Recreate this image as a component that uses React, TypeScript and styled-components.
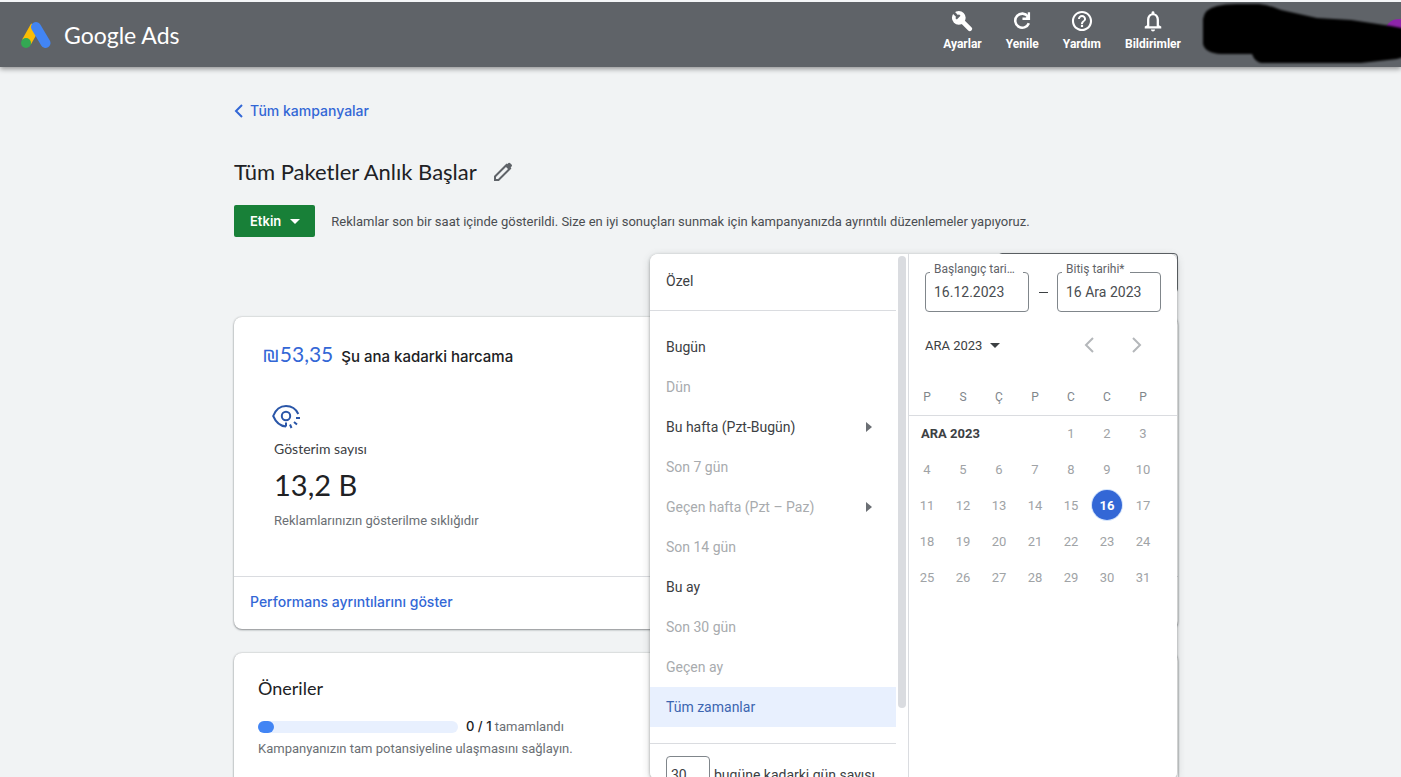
import React from "react";
import styled, { createGlobalStyle } from "styled-components";

const display = `Lato, "Open Sans", sans-serif`;
const medium = `Inter, "Open Sans", sans-serif`;
const body = `Roboto, "Liberation Sans", sans-serif`;

const GlobalStyle = createGlobalStyle`
  *, *::before, *::after { box-sizing: border-box; }
  body { margin: 0; background: #f1f3f4; color: #202124; font-family: ${body}; font-size: 13px; }
  button, input { font: inherit; color: inherit; }
  a { text-decoration: none; }
`;

const Page = styled.div`
  height: 100vh;
  overflow: hidden;
  display: flex;
  flex-direction: column;
  background: #f1f3f4;
`;

const Header = styled.header`
  flex: none;
  position: relative;
  display: flex;
  align-items: center;
  justify-content: space-between;
  height: 67px;
  padding: 0 220px 0 20px;
  border-top: 2px solid #f4f6f8;
  background: #5f6368;
  box-shadow: 0 2px 5px rgba(0, 0, 0, 0.4);
`;

const Brand = styled.a`
  display: flex;
  align-items: center;
  gap: 12px;
  color: #fff;
  font-family: ${display};
  font-size: 23px;
  line-height: 32px;
`;

const Tools = styled.nav`
  display: flex;
  gap: 24px;
  padding-bottom: 7px;
`;

const Tool = styled.button`
  display: flex;
  flex-direction: column;
  align-items: center;
  gap: 4px;
  padding: 0;
  border: 0;
  background: none;
  color: #fff;
  font-size: 12px;
  font-weight: 700;
  line-height: 16px;
`;

const Scribble = styled.svg`
  position: absolute;
  top: 0;
  right: 0;
`;

const Main = styled.main`
  padding-left: 11px;
`;

const Content = styled.div`
  max-width: 944px;
  margin: 0 auto;
`;

const BackLink = styled.a`
  display: flex;
  align-items: center;
  gap: 7px;
  padding-top: 34px;
  color: #3367d6;
  font-family: ${medium};
  font-size: 14px;
  font-weight: 500;
  line-height: 20px;
`;

const TitleRow = styled.div`
  display: flex;
  align-items: center;
  gap: 16px;
  margin-top: 37px;
`;

const Title = styled.h1`
  margin: 0;
  font-family: ${display};
  font-size: 22px;
  font-weight: 400;
  line-height: 28px;
`;

const IconButton = styled.button`
  display: flex;
  padding: 0;
  border: 0;
  background: none;
`;

const StatusRow = styled.div`
  display: flex;
  align-items: center;
  gap: 16px;
  margin-top: 19px;
  color: #4a4d51;
`;

const StatusButton = styled.button`
  display: flex;
  align-items: center;
  gap: 9px;
  height: 32px;
  padding: 0 15px 0 16px;
  border: 0;
  border-radius: 2px;
  background: #188038;
  color: #fff;
  font-family: ${medium};
  font-size: 13px;
  font-weight: 600;
`;

const RangeBar = styled.div`
  position: relative;
  display: flex;
  justify-content: flex-end;
  margin-top: 16px;
`;

const RangeButton = styled.button`
  width: 180px;
  height: 40px;
  border: 1px solid #5f6368;
  border-radius: 4px;
  background: none;
`;

const Card = styled.section`
  margin-top: 24px;
  border-radius: 8px;
  background: #fff;
  box-shadow: 0 1px 2px rgba(60, 64, 67, 0.5), 0 0 2px rgba(60, 64, 67, 0.3);
`;

const SpendRow = styled.h2`
  display: flex;
  align-items: baseline;
  gap: 8px;
  margin: 0;
  padding: 23px 28px 0;
  font-family: ${medium};
  font-size: 15px;
  font-weight: 500;
  line-height: 28px;
`;

const Amount = styled.span`
  color: #3367d6;
  font-family: ${display};
  font-size: 21px;
  font-weight: 400;
`;

const Metric = styled.div`
  padding: 33px 40px 45px;
  line-height: 20px;
`;

const MetricIcon = styled.svg`
  display: block;
  margin-left: -2px;
`;

const MetricName = styled.div`
  margin-top: 10px;
  color: #3c4043;
  font-family: ${display};
  font-size: 14px;
`;

const MetricValue = styled.div`
  margin: 8px 0;
  font-family: ${display};
  font-size: 29px;
  line-height: 36px;
`;

const Muted = styled.span`
  color: #6b6f74;
`;

const CardFooter = styled.footer`
  padding: 15px 16px 16px;
  border-top: 1px solid #dadce0;
  line-height: 20px;
`;

const FooterLink = styled.a`
  color: #3367d6;
  font-family: ${medium};
  font-size: 14px;
  font-weight: 500;
`;

const Advice = styled.div`
  padding: 21px 24px 160px;
`;

const AdviceTitle = styled.h2`
  margin: 0;
  font-family: ${display};
  font-size: 18px;
  font-weight: 400;
  line-height: 28px;
`;

const ProgressRow = styled.div`
  display: flex;
  align-items: center;
  gap: 8px;
  margin-top: 14px;
  line-height: 20px;
`;

const Track = styled.div`
  width: 200px;
  height: 12px;
  border-radius: 6px;
  background: #e8f0fe;
`;

const Fill = styled.div`
  height: 12px;
  border-radius: 6px;
  background: #4285f4;
`;

const Count = styled.b`
  font-family: ${medium};
  font-size: 13px;
  font-weight: 500;
`;

const Hint = styled.p`
  margin: 2px 0 0;
  color: #6b6f74;
  line-height: 20px;
`;

const Popup = styled.div`
  position: absolute;
  top: 1px;
  right: 1px;
  z-index: 2;
  display: grid;
  grid-template-columns: 259px 268px;
  height: 526px;
  overflow: hidden;
  border-radius: 8px;
  background: #fff;
`;

const PopupShadow = styled(Popup)`
  z-index: -1;
  width: 527px;
  box-shadow: 0 1px 3px rgba(60, 64, 67, 0.45), 0 2px 8px rgba(60, 64, 67, 0.2);
`;

const PopupLayer = styled.div`
  position: absolute;
  inset: 0;
  z-index: 1;
`;

const ListPane = styled.div`
  display: flex;
  min-height: 0;
  border-right: 1px solid #dadce0;
`;

const List = styled.div`
  flex: 1;
  padding-top: 7px;
`;

const ScrollThumb = styled.div`
  width: 8px;
  height: 452px;
  margin: 2px 2px 0;
  border-radius: 4px;
  background: #dadce0;
`;

const Option = styled.button<{ $selected?: boolean }>`
  display: flex;
  align-items: center;
  justify-content: space-between;
  width: 100%;
  height: 40px;
  padding: 0 24px 0 16px;
  border: 0;
  background: ${(p) => (p.$selected ? "#e8f0fe" : "none")};
  color: ${(p) => (p.$selected ? "#3c65b0" : "#3c4043")};
  font-size: 14px;
  text-align: left;
  &:disabled { color: #a8abae; }
`;

const Divider = styled.hr<{ $top?: number }>`
  margin: ${(p) => p.$top ?? 9}px 0 16px;
  border: 0;
  border-top: 1px solid #dadce0;
`;

const DaysLabel = styled.label`
  display: flex;
  align-items: center;
  gap: 4px;
  margin-top: -4px;
  padding-left: 16px;
  color: #3c4043;
  font-size: 14px;
`;

const DaysInput = styled.input`
  width: 44px;
  height: 37px;
  padding: 0 4px;
  border: 1px solid #80868b;
  border-radius: 4px;
  outline: 0;
`;

const Fields = styled.div`
  display: flex;
  align-items: center;
  justify-content: space-between;
  padding: 18px 16px 0;
  font-size: 14px;
`;

const Dash = styled.span`
  width: 9px;
  border-top: 1px solid #3c4043;
`;

const Field = styled.div`
  position: relative;
  width: 104px;
`;

const FieldLabel = styled.label`
  position: absolute;
  top: -10px;
  left: 5px;
  max-width: 93px;
  padding: 0 5px 0 4px;
  overflow: hidden;
  background: #fff;
  color: #5f6368;
  font-size: 12px;
  line-height: 14px;
  text-overflow: ellipsis;
  white-space: nowrap;
`;

const FieldInput = styled.input`
  display: block;
  width: 100%;
  height: 40px;
  padding: 0 8px;
  border: 1px solid #80868b;
  border-radius: 4px;
  outline: 0;
  background: #fff;
  color: #4a4d51;
`;

const MonthNav = styled.div`
  display: flex;
  align-items: center;
  gap: 36px;
  height: 32px;
  margin: 17px 34px 18px 16px;
`;

const MonthButton = styled.button`
  display: flex;
  align-items: center;
  gap: 8px;
  margin-right: auto;
  padding: 0;
  border: 0;
  background: none;
  color: #3c4043;
`;

const Calendar = styled.table`
  width: 100%;
  table-layout: fixed;
  border-collapse: collapse;
  color: #a0a3a6;
  thead tr { border-bottom: 1px solid #dadce0; }
  th, td { height: 36px; padding: 0; text-align: center; font-weight: 400; }
  thead th { color: #80868b; font-size: 12px; }
`;

const DayCol = styled.col`
  width: 36px;
`;

const MonthCell = styled.th`
  && { padding-left: 12px; color: #3c4043; font-weight: 700; text-align: left; }
`;

const Day = styled.button<{ $selected?: boolean }>`
  width: 30px;
  height: 30px;
  padding: 0;
  border: 0;
  border-radius: 50%;
  background: ${(p) => (p.$selected ? "#3367d6" : "none")};
  color: ${(p) => (p.$selected ? "#fff" : "inherit")};
  font-weight: ${(p) => (p.$selected ? 700 : 400)};
  box-shadow: ${(p) => (p.$selected ? "0 0 0 1px #d2e3fc" : "none")};
`;

const CaretDown = () => (
  <svg width="10" height="5" viewBox="0 0 10 5" fill="currentColor" aria-hidden="true">
    <path d="M0 0h10L5 5z" />
  </svg>
);

const CaretRight = () => (
  <svg width="6" height="10" viewBox="0 0 6 10" fill="#6b6f74" aria-hidden="true">
    <path d="M0 0v10l6-5z" />
  </svg>
);

const Chevron = ({ d }: { d: string }) => (
  <svg width="12" height="18" viewBox="0 0 12 18" fill="none" stroke="#b4b7ba" strokeWidth="2" aria-hidden="true">
    <path d={d} />
  </svg>
);

const WrenchIcon = () => (
  <svg width="22" height="22" viewBox="0 0 24 24" aria-hidden="true">
    <path d="M11 11l9.500 9.500" stroke="#fff" strokeWidth="5" strokeLinecap="round" />
    <circle cx="8.500" cy="8.500" r="7.500" fill="#fff" />
    <path d="M2 2l5.500 5.500" stroke="#5f6368" strokeWidth="3" />
    <path d="M5.500 9.500l4-4" stroke="#5f6368" strokeWidth="2.500" />
  </svg>
);

const RefreshIcon = () => (
  <svg width="22" height="22" viewBox="0 0 24 24" aria-hidden="true">
    <path d="M19.500 14.500a7.700 7.700 0 1 1-1-7.500" fill="none" stroke="#fff" strokeWidth="2.800" />
    <path d="M20.800 2.500v8.300h-8.300v-2.500h3.700l2.100-2.100V2.500z" fill="#fff" />
  </svg>
);

const HelpIcon = () => (
  <svg width="22" height="22" viewBox="0 0 24 24" fill="#fff" aria-hidden="true">
    <path d="M10.800 18.600h2.400v-2.400h-2.400v2.400zM12 1C5.900 1 1 5.900 1 12s4.900 11 11 11 11-4.900 11-11S18.100 1 12 1zm0 19.700c-4.800 0-8.700-3.900-8.700-8.700S7.200 3.300 12 3.300s8.700 3.900 8.700 8.700-3.900 8.700-8.700 8.700zM12 5.400c-2.400 0-4.400 2-4.400 4.400h2.200c0-1.200 1-2.200 2.200-2.200s2.200 1 2.200 2.200c0 2.200-3.300 1.900-3.300 5.500h2.200c0-2.500 3.300-2.800 3.300-5.500 0-2.400-2-4.400-4.400-4.400z" />
  </svg>
);

const BellIcon = () => (
  <svg width="22" height="22" viewBox="0 0 24 24" fill="#fff" aria-hidden="true">
    <path d="M12 23.500c1.200 0 2.200-1 2.200-2.200H9.800c0 1.200 1 2.200 2.200 2.200zm6.500-7v-6c0-3.300-1.800-6-4.900-6.700V2.900a1.600 1.600 0 0 0-3.200 0v.9C7.300 4.500 5.500 7.200 5.500 10.500v6L3 18v2.200h18V18l-2.500-1.500zm-2.500 1.300H8v-7.300c0-2.600 1.500-4.700 4-4.700s4 2.100 4 4.700v7.300z" />
  </svg>
);

const toolItems = [
  { label: "Ayarlar", Icon: WrenchIcon },
  { label: "Yenile", Icon: RefreshIcon },
  { label: "Yardım", Icon: HelpIcon },
  { label: "Bildirimler", Icon: BellIcon },
];

const options: { label: string; off?: boolean; more?: boolean; selected?: boolean }[] = [
  { label: "Bugün" },
  { label: "Dün", off: true },
  { label: "Bu hafta (Pzt-Bugün)", more: true },
  { label: "Son 7 gün", off: true },
  { label: "Geçen hafta (Pzt – Paz)", off: true, more: true },
  { label: "Son 14 gün", off: true },
  { label: "Bu ay" },
  { label: "Son 30 gün", off: true },
  { label: "Geçen ay", off: true },
  { label: "Tüm zamanlar", selected: true },
];

const weekdays = ["P", "S", "Ç", "P", "C", "C", "P"];
const weeks = [4, 11, 18, 25].map((start) => Array.from({ length: 7 }, (_, i) => start + i));

const DayCell = ({ day }: { day: number }) => (
  <td>
    <Day $selected={day === 16}>{day}</Day>
  </td>
);

const DatePopup = () => (
  <Popup role="dialog" aria-label="Tarih aralığı">
    <ListPane>
      <List>
        <Option>Özel</Option>
        <Divider />
        {options.map((o) => (
          <Option key={o.label} disabled={o.off} $selected={o.selected}>
            {o.label}
            {o.more && <CaretRight />}
          </Option>
        ))}
        <Divider $top={16} />
        <DaysLabel>
          <DaysInput defaultValue="30" />
          bugüne kadarki gün sayısı
        </DaysLabel>
      </List>
      <ScrollThumb />
    </ListPane>
    <div>
      <Fields>
        <Field>
          <FieldInput id="start" defaultValue="16.12.2023" />
          <FieldLabel htmlFor="start">Başlangıç tarihi*</FieldLabel>
        </Field>
        <Dash />
        <Field>
          <FieldInput id="end" defaultValue="16 Ara 2023" />
          <FieldLabel htmlFor="end">Bitiş tarihi*</FieldLabel>
        </Field>
      </Fields>
      <MonthNav>
        <MonthButton>
          ARA 2023 <CaretDown />
        </MonthButton>
        <IconButton aria-label="Önceki ay">
          <Chevron d="M10 2L3 9l7 7" />
        </IconButton>
        <IconButton aria-label="Sonraki ay">
          <Chevron d="M2 2l7 7-7 7" />
        </IconButton>
      </MonthNav>
      <Calendar>
        <colgroup>
          {weekdays.map((_, i) => (
            <DayCol key={i} />
          ))}
          <col />
        </colgroup>
        <thead>
          <tr>
            {weekdays.map((w, i) => (
              <th key={i} scope="col">{w}</th>
            ))}
            <td />
          </tr>
        </thead>
        <tbody>
          <tr>
            <MonthCell colSpan={4}>ARA 2023</MonthCell>
            {[1, 2, 3].map((d) => (
              <DayCell key={d} day={d} />
            ))}
          </tr>
          {weeks.map((week) => (
            <tr key={week[0]}>
              {week.map((d) => (
                <DayCell key={d} day={d} />
              ))}
            </tr>
          ))}
        </tbody>
      </Calendar>
    </div>
  </Popup>
);

export default function App() {
  return (
    <Page>
      <GlobalStyle />
      <Header>
        <Brand href="#">
          <svg width="32" height="30" viewBox="0 0 32 30" aria-hidden="true">
            <path d="M15.500 6L6.500 22" stroke="#fbbc04" strokeWidth="10" />
            <path d="M16 7l9.500 16" stroke="#4285f4" strokeWidth="10" strokeLinecap="round" />
            <circle cx="6" cy="23" r="5" fill="#34a853" />
          </svg>
          Google Ads
        </Brand>
        <Tools>
          {toolItems.map(({ label, Icon }) => (
            <Tool key={label}>
              <Icon />
              {label}
            </Tool>
          ))}
        </Tools>
        <Scribble width="200" height="64" viewBox="0 0 200 64" aria-hidden="true">
          <defs>
            <filter id="soft" x="-5%" y="-10%" width="110%" height="120%">
              <feGaussianBlur stdDeviation="1" />
            </filter>
          </defs>
          <circle cx="198" cy="32" r="15" fill="#8e24aa" />
          <path
            filter="url(#soft)"
            d="M2 17Q3 7 16 4Q24 2 36 2H58Q68 3 80 8L116 16L150 18L190 24L206 27V54L196 57L160 61H60Q54 60 51 52H20Q4 51 2 42z"
          />
        </Scribble>
      </Header>
      <Main>
        <Content>
          <BackLink href="#">
            <svg width="9" height="14" viewBox="0 0 9 14" fill="none" stroke="#3367d6" strokeWidth="2" aria-hidden="true">
              <path d="M8 1L2 7l6 6" />
            </svg>
            Tüm kampanyalar
          </BackLink>
          <TitleRow>
            <Title>Tüm Paketler Anlık Başlar</Title>
            <IconButton aria-label="Düzenle">
              <svg width="20" height="20" viewBox="0 0 20 20" fill="none" stroke="#5f6368" strokeWidth="2" aria-hidden="true">
                <path d="M2 18v-3.500L13.500 3 17 6.500 5.500 18z" />
                <path d="M12 4L15.500 1q1-.5 2 .5l1 1q1 1 0 2L16 8z" fill="#5f6368" stroke="none" />
              </svg>
            </IconButton>
          </TitleRow>
          <StatusRow>
            <StatusButton>
              Etkin <CaretDown />
            </StatusButton>
            Reklamlar son bir saat içinde gösterildi. Size en iyi sonuçları sunmak için kampanyanızda ayrıntılı düzenlemeler yapıyoruz.
          </StatusRow>
          <RangeBar>
            <RangeButton aria-label="Tarih aralığı seç" />
            <PopupLayer>
              <PopupShadow />
              <DatePopup />
            </PopupLayer>
          </RangeBar>
          <Card>
            <SpendRow>
              <Amount>₪53,35</Amount> Şu ana kadarki harcama
            </SpendRow>
            <Metric>
              <MetricIcon width="28" height="25" viewBox="0 0 28 25" fill="none" stroke="#2a56a8" strokeWidth="2" aria-hidden="true">
                <path d="M14 22.500C7.500 22 3.500 17.500 1.200 12 3.500 6 8 2 14 2s10 3 12.300 8" />
                <path d="M14 18.500v4" />
                <circle cx="14" cy="12" r="4.200" />
                <path d="M24 14h4M22 18l3 2.500M18 20.500l1.500 3.500" />
              </MetricIcon>
              <MetricName>Gösterim sayısı</MetricName>
              <MetricValue>13,2 B</MetricValue>
              <Muted>Reklamlarınızın gösterilme sıklığıdır</Muted>
            </Metric>
            <CardFooter>
              <FooterLink href="#">Performans ayrıntılarını göster</FooterLink>
            </CardFooter>
          </Card>
          <Card>
            <Advice>
              <AdviceTitle>Öneriler</AdviceTitle>
              <ProgressRow>
                <Track>
                  <Fill style={{ width: "8%" }} />
                </Track>
                <span>
                  <Count>0 / 1</Count> <Muted>tamamlandı</Muted>
                </span>
              </ProgressRow>
              <Hint>Kampanyanızın tam potansiyeline ulaşmasını sağlayın.</Hint>
            </Advice>
          </Card>
        </Content>
      </Main>
    </Page>
  );
}
